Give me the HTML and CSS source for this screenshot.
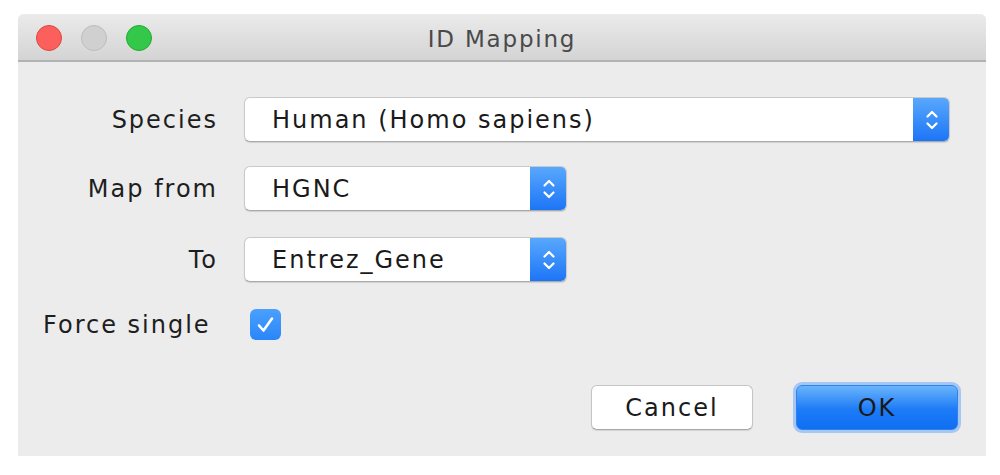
FILE: index.html
```html
<!DOCTYPE html>
<html>
<head>
<meta charset="utf-8">
<link rel="stylesheet" href="styles.css">
</head>
<body>
<div class="window">
  <div class="titlebar">
    <div class="lights">
      <span class="light red"></span>
      <span class="light gray"></span>
      <span class="light green"></span>
    </div>
    <div class="title">ID Mapping</div>
  </div>
  <div class="content">
    <div class="form">
      <label class="lbl">Species</label>
      <div class="combo wide">
        <span class="value">Human (Homo sapiens)</span>
        <span class="stepper"><svg width="14" height="26" viewBox="0 0 14 26"><path d="M2.5 9.5 L7 5 L11.5 9.5 M2.5 16.5 L7 21 L11.5 16.5" fill="none" stroke="#fff" stroke-width="2.2" stroke-linecap="round" stroke-linejoin="round"/></svg></span>
      </div>
      <label class="lbl">Map from</label>
      <div class="combo narrow">
        <span class="value">HGNC</span>
        <span class="stepper"><svg width="14" height="26" viewBox="0 0 14 26"><path d="M2.5 9.5 L7 5 L11.5 9.5 M2.5 16.5 L7 21 L11.5 16.5" fill="none" stroke="#fff" stroke-width="2.2" stroke-linecap="round" stroke-linejoin="round"/></svg></span>
      </div>
      <label class="lbl">To</label>
      <div class="combo narrow">
        <span class="value">Entrez_Gene</span>
        <span class="stepper"><svg width="14" height="26" viewBox="0 0 14 26"><path d="M2.5 9.5 L7 5 L11.5 9.5 M2.5 16.5 L7 21 L11.5 16.5" fill="none" stroke="#fff" stroke-width="2.2" stroke-linecap="round" stroke-linejoin="round"/></svg></span>
      </div>
      <label class="lbl left">Force single</label>
      <div class="check-cell">
        <span class="checkbox"><svg width="31" height="31" viewBox="0 0 31 31"><path d="M9 16.5 L13.5 21.5 L22 9.5" fill="none" stroke="#fff" stroke-width="2.6" stroke-linecap="round" stroke-linejoin="round"/></svg></span>
      </div>
    </div>
    <div class="buttons">
      <button class="btn cancel">Cancel</button>
      <button class="btn ok">OK</button>
    </div>
  </div>
</div>
</body>
</html>
```
FILE: styles.css
```css
html, body {
  margin: 0;
  padding: 0;
  background: #ffffff;
}
body {
  font-family: "DejaVu Sans", "Liberation Sans", sans-serif;
  color: #1e1e1e;
  padding: 14px 0 0 18px;
  width: 1000px;
  height: 475px;
  box-sizing: border-box;
}
.window {
  width: 968px;
  height: 442px;
  background: #ececec;
  border-radius: 6px 6px 0 0;
  display: flex;
  flex-direction: column;
  overflow: hidden;
}
.titlebar {
  height: 46px;
  background: linear-gradient(#ebebeb, #d4d4d4);
  border-bottom: 2px solid #b3b3b3;
  display: flex;
  align-items: center;
  position: relative;
}
.lights {
  display: flex;
  gap: 19px;
  padding-left: 18px;
  padding-top: 2px;
}
.light {
  width: 26px;
  height: 26px;
  border-radius: 50%;
  box-sizing: border-box;
}
.red { background: #fc605c; border: 1px solid #e0443e; }
.gray { background: #d0d0d0; border: 1px solid #bdbdbd; }
.green { background: #34c84a; border: 1px solid #1daa2e; }
.title {
  position: absolute;
  left: 0;
  right: 0;
  top: 3px;
  bottom: 0;
  display: flex;
  align-items: center;
  justify-content: center;
  font-size: 23px;
  color: #4a4a4a;
  letter-spacing: 1.8px;
}
.content {
  flex: 1;
  display: flex;
  flex-direction: column;
  padding: 35px 36px 0 25px;
}
.form {
  display: grid;
  grid-template-columns: 175px 1fr;
  column-gap: 26px;
  align-items: center;
}
.lbl {
  font-size: 24px;
  letter-spacing: 2px;
  text-align: right;
  color: #1e1e1e;
}
.lbl.left {
  text-align: left;
}
.combo {
  height: 45px;
  box-sizing: border-box;
  background: #fff;
  border: 1px solid #c9c9c9;
  border-bottom-color: #a9a9a9;
  border-radius: 6px;
  display: flex;
  align-items: center;
  box-shadow: 0 1px 1px rgba(0,0,0,0.12);
  overflow: hidden;
}
.combo.wide { width: 706px; }
.combo.narrow { width: 323px; }
.form .combo:nth-child(4) { margin-top: 24px; }
.form .lbl:nth-child(3) { margin-top: 24px; }
.form .combo:nth-child(6) { margin-top: 26px; }
.form .lbl:nth-child(5) { margin-top: 26px; }
.value {
  flex: 1;
  padding-left: 27px;
  font-size: 24px;
  letter-spacing: 2px;
  color: #1a1a1a;
}
.stepper {
  width: 37px;
  align-self: stretch;
  margin: -1px -1px -1px 0;
  background: linear-gradient(#5aa9fd, #1b74f6);
  display: flex;
  align-items: center;
  justify-content: center;
  border-radius: 0 6px 6px 0;
}
.check-cell {
  margin-top: 27px;
  padding-left: 6px;
  display: flex;
}
.form .lbl:nth-child(7) { margin-top: 27px; }
.checkbox {
  width: 31px;
  height: 31px;
  border-radius: 6px;
  background: linear-gradient(#4aa0fd, #2a86f8);
  display: block;
}
.checkbox svg { display: block; }
.buttons {
  display: flex;
  justify-content: flex-end;
  gap: 43px;
  margin-top: 45px;
  margin-right: -8px;
}
.btn {
  font-family: "DejaVu Sans", "Liberation Sans", sans-serif;
  font-size: 24px;
  letter-spacing: 2px;
  height: 45px;
  color: #1a1a1a;
  border-radius: 6px;
  box-sizing: border-box;
}
.cancel {
  width: 162px;
  background: #fff;
  border: 1px solid #c4c4c4;
  border-bottom-color: #a8a8a8;
  box-shadow: 0 1px 1px rgba(0,0,0,0.1);
}
.ok {
  width: 162px;
  background: linear-gradient(#6ab4fb, #1d7bf7 55%, #0f6ff2);
  border: 1px solid #2f82ee;
  box-shadow: 0 0 0 3px rgba(110, 170, 250, 0.55);
}
```
